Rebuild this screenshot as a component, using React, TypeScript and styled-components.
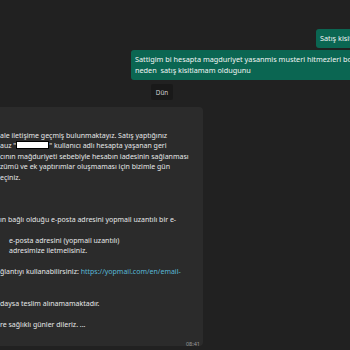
import { createGlobalStyle, styled } from 'styled-components'

const Global = createGlobalStyle`
  html, body {
    margin: 0;
    padding: 0;
    background: #212121;
  }
  body {
    font-family: 'Noto Sans', 'Open Sans', sans-serif;
  }
`

const Screen = styled.div`
  width: 350px;
  height: 350px;
  overflow: hidden;
  background: #212121;
  display: flex;
  flex-direction: column;
  padding-top: 29px;
  box-sizing: border-box;
`

const OutBubble = styled.div<{ $left: number; $gap: number }>`
  margin-left: ${(p) => p.$left}px;
  margin-top: ${(p) => p.$gap}px;
  width: 400px;
  flex-shrink: 0;
  background: #0b6652;
  color: #f2f5f4;
  font-size: 7.3px;
  line-height: 11px;
  padding: 4px 4px 4px 4px;
  border-radius: 3px 0 0 3px;
  white-space: nowrap;
  box-sizing: border-box;
`

const DayChip = styled.div`
  align-self: flex-start;
  margin-left: 151px;
  margin-top: 4px;
  height: 16px;
  width: 22px;
  background: #191919;
  color: #d0d0d0;
  font-size: 6.3px;
  border-radius: 2px;
  display: flex;
  align-items: center;
  justify-content: center;
`

const InBubble = styled.div`
  margin-top: 7px;
  width: 203px;
  height: 239px;
  flex-shrink: 0;
  background: #2b2b2b;
  border-radius: 0 4px 4px 0;
  padding-top: 13px;
  box-sizing: border-box;
  display: flex;
  flex-direction: column;
  color: #e6e8e9;
  font-size: 7px;
  line-height: 10.5px;
`

const Line = styled.div<{ $indent?: number }>`
  height: 10.5px;
  white-space: nowrap;
  padding-left: ${(p) => p.$indent ?? 0}px;
`

const Redacted = styled.span`
  display: inline-block;
  width: 31px;
  height: 6px;
  background: #ffffff;
  border: 1.5px solid #000;
  vertical-align: -1px;
`

const Link = styled.span`
  color: #58b8d6;
`

const Time = styled.div`
  align-self: flex-end;
  margin-top: 9px;
  margin-right: 3px;
  font-size: 5.5px;
  color: #9a9a9a;
`

export default function App() {
  return (
    <>
      <Global />
      <Screen>
        <OutBubble $left={316} $gap={0}>
          Satış kisitlaması
        </OutBubble>
        <OutBubble $left={131} $gap={2}>
          Sattigim bi hesapta magduriyet yasanmis musteri hitmezleri boyunca
          <br />
          neden&nbsp; satış kisitlamam oldugunu
        </OutBubble>
        <DayChip>Dün</DayChip>
        <InBubble>
          <Line>&nbsp;</Line>
          <Line>ale iletişime geçmiş bulunmaktayız. Satış yaptığınız</Line>
          <Line>
            auz "<Redacted />" kullanıcı adlı hesapta yaşanan geri
          </Line>
          <Line>cının mağduriyeti sebebiyle hesabın iadesinin sağlanması</Line>
          <Line>zümü ve ek yaptırımlar oluşmaması için bizimle gün</Line>
          <Line>eçiniz.</Line>
          <Line>&nbsp;</Line>
          <Line>&nbsp;</Line>
          <Line>&nbsp;</Line>
          <Line>ın bağlı olduğu e-posta adresini yopmail uzantılı bir e-</Line>
          <Line>&nbsp;</Line>
          <Line $indent={9}>e-posta adresini (yopmail uzantılı)</Line>
          <Line $indent={9}>adresimize iletmelisiniz.</Line>
          <Line>&nbsp;</Line>
          <Line>
            ğlantıyı kullanabilirsiniz: <Link>https://yopmail.com/en/email-</Link>
          </Line>
          <Line>&nbsp;</Line>
          <Line>&nbsp;</Line>
          <Line>daysa teslim alınamamaktadır.</Line>
          <Line>&nbsp;</Line>
          <Line>re sağlıklı günler dileriz. ...</Line>
          <Time>08:41</Time>
        </InBubble>
      </Screen>
    </>
  )
}
